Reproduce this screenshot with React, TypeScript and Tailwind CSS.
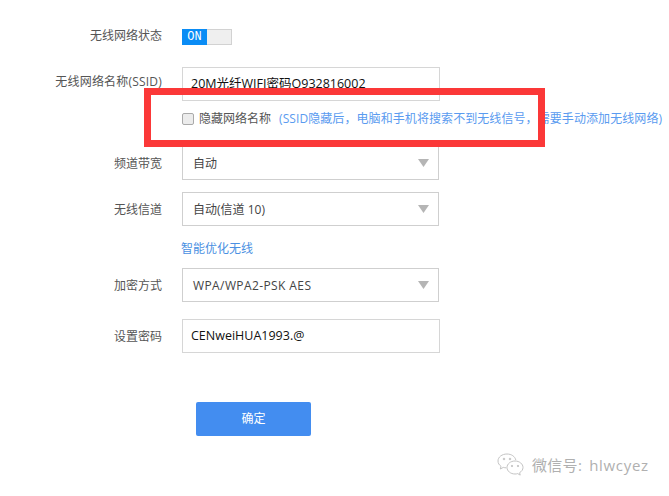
const font = "font-['Open_Sans','Noto_Sans_CJK_SC','Liberation_Sans',sans-serif]";

function Label({ children, className = "pt-[2px]" }: { children: string; className?: string }) {
  return <div className={`w-[162px] shrink-0 text-right text-[12px] text-[#555] ${className}`}>{children}</div>;
}

function Caret() {
  return (
    <svg width="11" height="8" viewBox="0 0 11 8" className="shrink-0">
      <polygon points="0,0 11,0 5.5,8" fill="#b5b5b5" />
    </svg>
  );
}

function SelectRow({
  label,
  value,
  className,
  valueClass = "",
}: {
  label: string;
  value: string;
  className: string;
  valueClass?: string;
}) {
  return (
    <div className={`flex items-center gap-[20px] ${className}`}>
      <Label>{label}</Label>
      <div className="flex h-[34px] w-[257px] items-center justify-between border border-[#cfcfcf] pl-[10px] pr-[9px] text-[12px] text-[#444]">
        <span className={`pt-[2px] ${valueClass}`}>{value}</span>
        <Caret />
      </div>
    </div>
  );
}

function InputRow({
  label,
  value,
  className,
  labelClass,
}: {
  label: string;
  value: string;
  className: string;
  labelClass?: string;
}) {
  return (
    <div className={`flex items-center gap-[20px] ${className}`}>
      <Label className={labelClass}>{label}</Label>
      <div className="flex h-[34px] w-[258px] items-center border border-[#d6d6d6] pl-[8px] pt-px text-[12.5px] text-[#111]">
        {value}
      </div>
    </div>
  );
}

function WechatIcon() {
  return (
    <svg width="28" height="25" viewBox="0 0 28 25" fill="none" stroke="#c4c4c4" strokeWidth="1">
      <path d="M10 1C5 1 1 4 1 8c0 2.200 1.200 4 3 5.300L3.300 16l3-1.600c1 .3 2 .4 3 .4" />
      <path d="M10 1c4.500 0 8 2.500 8.800 6" />
      <path d="M18 8c-4.500 0-8 3-8 6.500S13.500 21 18 21c1 0 1.800-.1 2.700-.4l2.500 1.500-.6-2.400c2-1.200 3.400-3.100 3.400-5.200C26 11 22.500 8 18 8z" />
      <circle cx="7" cy="6" r=".8" fill="#c4c4c4" />
      <circle cx="13" cy="6" r=".8" fill="#c4c4c4" />
      <circle cx="15" cy="13" r=".7" fill="#c4c4c4" />
      <circle cx="21" cy="13" r=".7" fill="#c4c4c4" />
    </svg>
  );
}

export default function App() {
  return (
    <div className={`relative h-[496px] w-[669px] overflow-hidden bg-white ${font}`}>
      {/* Status */}
      <div className="flex h-[45px] items-end gap-[20px]">
        <Label className="mb-0">无线网络状态</Label>
        <div className="flex h-[16px] w-[50px] border border-[#d2d2d2] bg-[#efefef]">
          <div className="-my-px -ml-px flex h-[16px] w-[25px] items-center justify-center bg-[#0a8cf5] font-['Liberation_Mono',monospace] text-[12px] text-white">
            ON
          </div>
        </div>
      </div>

      <InputRow
        label="无线网络名称(SSID)"
        value="20M光纤WIFI密码O932816002"
        className="mt-[22px]"
        labelClass="mb-[4px] tracking-[0.2px]"
      />

      {/* Hide SSID */}
      <div className="mt-[9px] flex h-[18px] items-center whitespace-nowrap pl-[182px] text-[12px]">
        <div className="h-[12px] w-[12px] rounded-[2px] border border-[#aaa] bg-[#ececec]" />
        <span className="ml-[5px] text-[#555]">隐藏网络名称</span>
        <span className="ml-[8px] tracking-[0.08px] text-[#5a9bf0]">
          (SSID隐藏后，电脑和手机将搜索不到无线信号，需要手动添加无线网络)
        </span>
      </div>

      <SelectRow label="频道带宽" value="自动" className="mt-[18px]" />
      <SelectRow label="无线信道" value="自动(信道 10)" className="mt-[12px]" />

      <div className="mt-[14px] h-[18px] pl-[181px] text-[12px] leading-[18px] text-[#4a90e2]">智能优化无线</div>

      <SelectRow
        label="加密方式"
        value="WPA/WPA2-PSK AES"
        className="mt-[10px]"
        valueClass="tracking-[0.4px]"
      />
      <InputRow label="设置密码" value="CENweiHUA1993.@" className="mt-[17px]" labelClass="pt-[2px]" />

      <div className="mt-[49px] pl-[196px]">
        <button className="h-[34px] w-[115px] rounded-[2px] bg-[#438df0] text-[12px] text-white">确定</button>
      </div>

      {/* Red annotation frame */}
      <div className="absolute left-[144px] top-[88px] h-[59px] w-[401px] border-[7px] border-[#fb3838]" />

      {/* Watermark */}
      <div className="absolute left-[497px] top-[453px] flex items-center gap-[7px] text-[15px] text-[#b0b0b0]">
        <WechatIcon />
        <span className="whitespace-pre tracking-[0.3px]">
          微信号:<span className="ml-[7px] tracking-[0.7px]">hlwcyez</span>
        </span>
      </div>
    </div>
  );
}
